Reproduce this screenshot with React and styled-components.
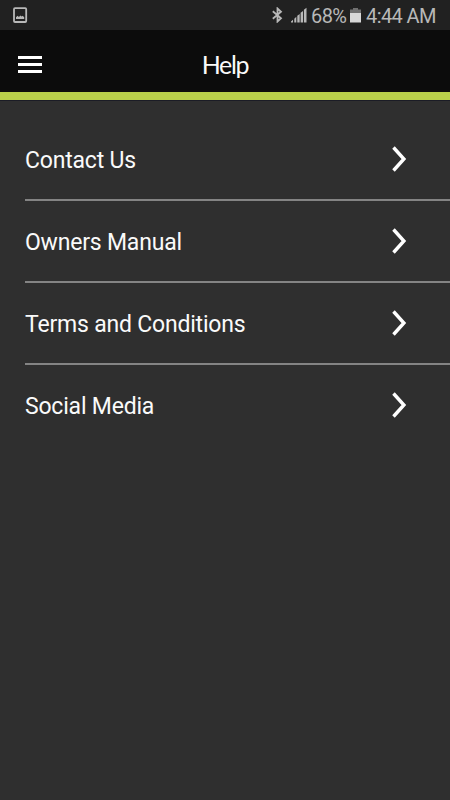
import React from 'react'
import styled, { createGlobalStyle } from 'styled-components'

const white = '#fafafa'
const statusGrey = '#b8b8b8'
const lime = '#b9d04a'

const GlobalStyle = createGlobalStyle`
  * {
    box-sizing: border-box;
  }

  body {
    margin: 0;
    background: #2f2f2f;
    font-family: Roboto, sans-serif;
  }
`

const Screen = styled.div`
  display: flex;
  flex-direction: column;
  width: 450px;
  height: 800px;
  overflow: hidden;
  background: #2f2f2f;
  color: ${white};
`

const StatusBar = styled.div`
  display: flex;
  align-items: center;
  height: 30px;
  padding: 0 13px;
  background: #212121;
  color: ${statusGrey};
`

const StatusIcons = styled.div`
  display: flex;
  align-items: center;
  margin-left: auto;
`

const StatusText = styled.span`
  width: ${props => props.$width}px;
  margin-left: ${props => props.$gap}px;
  padding-top: 2px;
  font-size: 20px;
  line-height: 30px;
  letter-spacing: -0.6px;
  white-space: nowrap;
`

const Icon = styled.svg`
  display: block;
  flex: none;
  margin-left: ${props => props.$gap || 0}px;
`

const Header = styled.header`
  display: grid;
  grid-template-columns: 60px 1fr 60px;
  align-items: center;
  height: 70px;
  padding-top: 7px;
  border-bottom: 8px solid ${lime};
  background: #0c0c0c;
`

const MenuButton = styled.button`
  display: flex;
  flex-direction: column;
  gap: 4px;
  width: 60px;
  padding: 0 18px;
  border: 0;
  background: none;
`

const MenuBar = styled.span`
  height: 3px;
  background: #fff;
`

const Title = styled.h1`
  margin: 0;
  padding-bottom: 2px;
  font-family: Lato, sans-serif;
  font-size: 25px;
  font-weight: 400;
  line-height: 38px;
  text-align: center;
  letter-spacing: -1.3px;
`

const Menu = styled.nav`
  padding: 19px 0 0 25px;
  border-top: 1px solid #1b1c26;
  margin-bottom: auto;
`

const MenuItem = styled.div`
  display: flex;
  align-items: center;
  justify-content: space-between;
  height: 82px;
  padding-right: 43px;
  border-bottom: 2px solid #848484;

  &:first-child {
    margin-top: -1px;
  }

  &:last-child {
    border-bottom-color: transparent;
  }
`

const Label = styled.span`
  padding-top: 4px;
  font-size: 23px;
  line-height: 30px;
  letter-spacing: -0.2px;
`

const items = ['Contact Us', 'Owners Manual', 'Terms and Conditions', 'Social Media']

const PictureIcon = () => <Icon width="15" height="17" viewBox="0 0 15 17">
  <rect x="1" y="1.2" width="12.2" height="13.8" rx="1" fill="none" stroke={statusGrey} strokeWidth="1.8" />
  <path d="M3 12V10.2L4.6 8.8L5.9 10L7.4 8.6L8.7 9.6L9.7 8.8L11.2 10.2V12Z" fill={statusGrey} />
</Icon>

const BluetoothIcon = () => <Icon width="12" height="16" viewBox="0 0 12 16">
  <path d="M.8 4.3L9 11.2L5.5 14.5V1.5L9 4.8L.8 11.7" fill="none" stroke={statusGrey} strokeWidth="1.8" />
</Icon>

const SignalIcon = () => <Icon $gap={7} width="16" height="16" viewBox="0 0 16 16">
  <path d="M0 15.5V14.5L2 12.8V15.5ZM3.3 15.5V11.7L5.3 9.8V15.5ZM6.3 15.5V8.8L8.7 6.9V15.5ZM9.6 15.5V5.8L12 4V15.5ZM12.9 15.5V2.8L15.5 .7V15.5Z" fill={statusGrey} />
</Icon>

const BatteryIcon = () => <Icon $gap={4} width="11" height="16" viewBox="0 0 11 16">
  <path d="M0 2.5H3V1H8V2.5H11V6H0Z" fill="#707070" />
  <path d="M0 6H11V15.5H0Z" fill="#d8d8d8" />
</Icon>

const Chevron = () => <Icon width="16" height="28" viewBox="0 0 16 28">
  <path d="M2.5 2.5L12.9 14L2.5 25.5" fill="none" stroke="#fff" strokeWidth="3.4" />
</Icon>

const App = () => <>
  <GlobalStyle />
  <Screen>
    <StatusBar>
      <PictureIcon />
      <StatusIcons>
        <BluetoothIcon />
        <SignalIcon />
        <StatusText $width={35} $gap={4}>68%</StatusText>
        <BatteryIcon />
        <StatusText $width={71} $gap={5}>4:44 AM</StatusText>
      </StatusIcons>
    </StatusBar>
    <Header>
      <MenuButton aria-label="Menu">
        <MenuBar />
        <MenuBar />
        <MenuBar />
      </MenuButton>
      <Title>Help</Title>
    </Header>
    <Menu>
      {items.map(item => <MenuItem key={item}>
        <Label>{item}</Label>
        <Chevron />
      </MenuItem>)}
    </Menu>
  </Screen>
</>

export default App
